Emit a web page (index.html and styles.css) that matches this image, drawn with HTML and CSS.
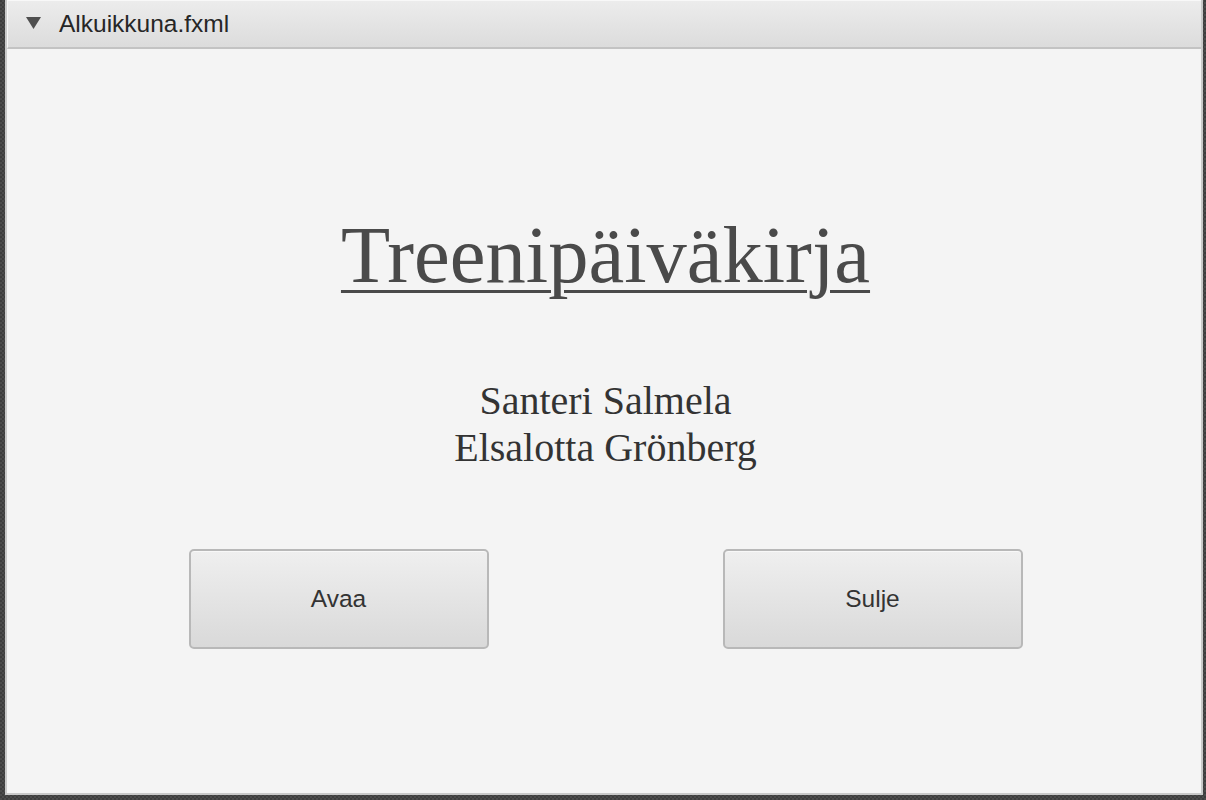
FILE: index.html
```html
<!DOCTYPE html>
<html lang="fi">
<head>
<meta charset="utf-8">
<title>Alkuikkuna.fxml</title>
<link rel="stylesheet" href="styles.css">
</head>
<body>
<div class="window">
  <div class="titlebar">
    <svg class="tri" width="15" height="12" viewBox="0 0 15 12"><polygon points="0,0 15,0 7.5,12" fill="#4f4f4f"/></svg>
    <span class="title-text">Alkuikkuna.fxml</span>
  </div>
  <div class="content">
    <h1 class="app-title">Treenipäiväkirja</h1>
    <div class="authors">
      <div>Santeri Salmela</div>
      <div>Elsalotta Grönberg</div>
    </div>
    <div class="buttons">
      <button class="btn">Avaa</button>
      <button class="btn">Sulje</button>
    </div>
  </div>
</div>
</body>
</html>
```
FILE: styles.css
```css
html, body {
  margin: 0;
  height: 100%;
}
body {
  background-color: #3d3d3d;
  background-image:
    linear-gradient(45deg, #4b4b4b 25%, transparent 25%, transparent 75%, #4b4b4b 75%),
    linear-gradient(45deg, #4b4b4b 25%, transparent 25%, transparent 75%, #4b4b4b 75%);
  background-size: 4px 4px;
  background-position: 0 0, 2px 2px;
  padding: 0 3px 5px 5px;
  box-sizing: border-box;
  display: flex;
}
.window {
  flex: 1;
  display: flex;
  flex-direction: column;
  border: 2px solid #c9c9c9;
  border-top: none;
  background: #f4f4f4;
}
.titlebar {
  height: 49px;
  flex: none;
  display: flex;
  align-items: center;
  box-sizing: border-box;
  border-top: 1px solid #f8f8f8;
  border-left: 1px solid #f6f6f6;
  border-bottom: 2px solid #c3c3c3;
  background: linear-gradient(#ececec, #dcdcdc);
  padding-left: 18px;
  font-family: "Liberation Sans", Arial, sans-serif;
}
.tri {
  display: block;
  margin-right: 18px;
  margin-top: -2px;
}
.title-text {
  font-size: 24.5px;
  color: #262626;
}
.content {
  flex: 1;
  display: flex;
  flex-direction: column;
  align-items: center;
  padding-left: 3px;
}
.app-title {
  margin: 160px 0 0 0;
  font-family: "Liberation Serif", "Times New Roman", serif;
  font-weight: normal;
  font-size: 80.5px;
  line-height: 92px;
  color: #4a4a4a;
  text-decoration: underline;
  text-decoration-thickness: 3px;
  text-underline-offset: 8px;
}
.authors {
  margin-top: 76px;
  font-family: "Liberation Serif", "Times New Roman", serif;
  font-size: 40px;
  line-height: 47px;
  color: #333333;
  text-align: center;
}
.buttons {
  margin-top: 78px;
  display: flex;
  gap: 234px;
}
.btn {
  width: 300px;
  height: 100px;
  box-sizing: border-box;
  border: 2px solid #b8b8b8;
  border-radius: 5px;
  background: linear-gradient(#efefef, #d9d9d9);
  box-shadow: inset 0 1px 0 #f8f8f8;
  font-family: "Liberation Sans", Arial, sans-serif;
  font-size: 24.5px;
  color: #333333;
  padding: 0;
}
```
